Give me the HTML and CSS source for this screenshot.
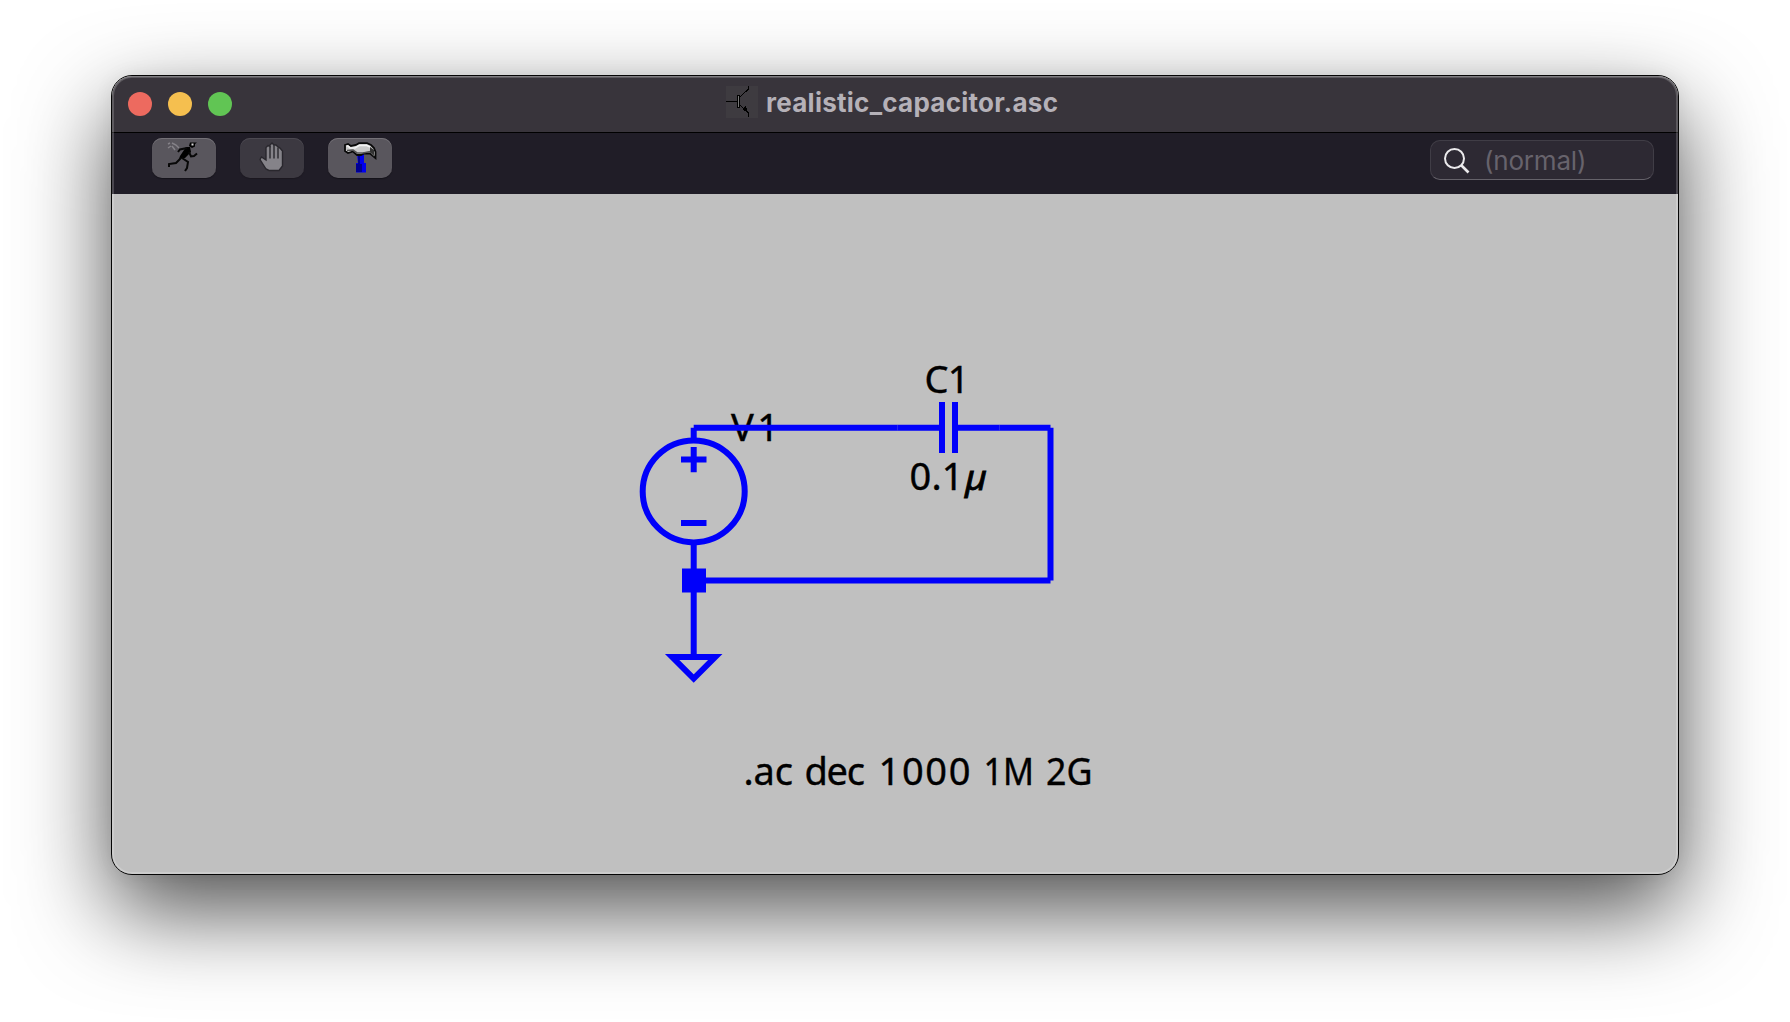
FILE: index.html
```html
<!DOCTYPE html>
<html lang="en">
<head>
<meta charset="utf-8">
<title>realistic_capacitor.asc</title>
<link rel="stylesheet" href="styles.css">
</head>
<body>
<main class="window">
  <header class="titlebar">
    <div class="lights"><i class="light close"></i><i class="light minimize"></i><i class="light expand"></i></div>
    <div class="title">
      <svg class="file-icon" viewBox="0 0 32 32" shape-rendering="crispEdges">
        <rect width="32" height="32" fill="#3e3b40"/>
        <g fill="none" stroke="#000"><path d="M0 15.5H11M14 11L22.5 3V0M14 19L22.5 27V31"/><rect x="11.5" y="9.500" width="2" height="12" fill="#777"/></g>
        <path d="M16 23L20 20L22 27Z"/>
      </svg>
      <h1>realistic_capacitor.asc</h1>
    </div>
  </header>
  <nav class="toolbar">
    <div class="tools">
      <button class="tool" aria-label="Run">
        <svg viewBox="0 0 64 40">
          <g fill="none" stroke="#858288" stroke-width="1.500"><path d="M16 6L18 5M20 5L24 7L27 10M16 10L19 8M20 8L23 12"/></g>
          <path d="M38 4.500H45L43 6V8.500L40 10L37 8ZM34 9H38L39 14L33 20L27 21L28 18Z" fill="#000"/>
          <path d="M35 10L28 11.500L26 14M37 14L39 18.500L42 18L45 15.500M29 20L24 25L17 26V29M30 20L36 24L35 30L33 33" fill="none" stroke="#080808" stroke-width="2"/>
          <path d="M39.500 6.500h2" stroke="#ddd" stroke-width="2"/>
        </svg>
      </button>
      <button class="tool muted" aria-label="Halt">
        <svg viewBox="0 0 64 40">
          <path d="M26 31L20 21.500L21.500 19L26 22V9.500L28 7.500L30 8.500V7L32 5L34 7L36 7L38 9L40 10L42.500 13V28L39 32.500H29Z" fill="#858389" stroke="#29272d" stroke-width="1.400"/>
          <path d="M30 8V20.500M34 7V20.500M38 9.500V20.500" stroke="#343238" stroke-width="1.600"/>
        </svg>
      </button>
      <button class="tool" aria-label="Control panel">
        <svg viewBox="0 0 64 40">
          <path d="M29 16H36V25H38V34.500H28V25H30Z" fill="#0000f0"/>
          <path d="M30 17h2v9h2v8h-6v-8h2Z" fill="#000091"/>
          <path d="M17 7L20 6L23 8L28 7L31 5.200H39L43 7L46 10L47.500 14V20L42 15.500H36L33 17H29L25 13.500L20 15L17 13Z" fill="#c9c9c9" stroke="#080808" stroke-width="1.800"/>
          <path d="M18.500 8L20 8L22 10H27L31 7.500H39L42 9" fill="none" stroke="#f2f2f2" stroke-width="1.600"/>
          <path d="M19 12.500L25 12L29 15H35L42 13.500L46.500 18" fill="none" stroke="#555" stroke-width="1.600"/>
          <path d="M42 9L46 12V17L42 14Z" fill="#333"/>
        </svg>
      </button>
    </div>
    <div class="search">
      <svg class="search-icon" viewBox="0 0 28 28" fill="none" stroke="#ebeaec"><circle cx="11.500" cy="11.500" r="9.500" stroke-width="2"/><path d="M18 18L25.500 25.500" stroke-width="2.700"/></svg>
      <span>(normal)</span>
    </div>
  </nav>
  <section class="canvas">
    <svg class="schematic" viewBox="112 194 1566 680">
      <g class="label">
        <text x="731" y="441" textLength="48">V1</text>
        <text x="924.500" y="393" textLength="45">C1</text>
        <text x="909.500" y="490" textLength="54">0.1</text>
        <text class="mu" x="965" y="490" textLength="22" lengthAdjust="spacingAndGlyphs">µ</text>
        <text x="743.500" y="785" textLength="49.500">.ac</text>
        <text x="804.500" y="785" textLength="60.500">dec</text>
        <text x="878.500" y="785" textLength="92">1000</text>
        <text x="983.500" y="785" textLength="50.500" lengthAdjust="spacingAndGlyphs">1M</text>
        <text x="1046" y="785" textLength="46.500" lengthAdjust="spacingAndGlyphs">2G</text>
      </g>
      <g class="wire">
        <path d="M693.700 427.800H942M955 427.800H1050.500M1050.500 427.800V580.400M1050.500 580.400H693.700M693.700 427.800V440M693.700 542V657"/>
        <path d="M942 402V453M955 402V453"/>
        <circle cx="693.700" cy="491.400" r="51"/>
        <path d="M681 459.500H706.500M693.700 447V472.300M681 523H706.500"/>
        <path d="M672.200 657H715.200L693.700 678.500Z"/>
      </g>
      <path class="seam" d="M897.500 425V431M999.500 425V431"/>
      <rect class="junction" x="682" y="568.500" width="24" height="24"/>
    </svg>
  </section>
</main>
</body>
</html>
```
FILE: styles.css
```css
* { box-sizing: border-box; }
body {
  margin: 0;
  padding: 75px 111px;
  height: 1022px;
  overflow: hidden;
  background: #fff;
}
.window {
  position: relative;
  display: flex;
  flex-direction: column;
  width: 1568px;
  height: 800px;
  border: 1px solid #050505;
  border-radius: 21px;
  background: #c0c0c0;
  box-shadow: 0 36px 90px rgba(0, 0, 0, .69), 0 0 20px rgba(0, 0, 0, .06);
}
.window::after {
  content: "";
  position: absolute;
  inset: 0;
  border-radius: 20px;
  box-shadow: inset 0 0 0 2px rgba(255, 255, 255, .19), inset 0 1px 0 rgba(255, 255, 255, .22);
  pointer-events: none;
}
.titlebar {
  display: grid;
  grid-template-columns: 1fr auto 1fr;
  align-items: center;
  height: 57px;
  flex: none;
  padding: 0 16px;
  border-bottom: 1px solid #000;
  border-radius: 20px 20px 0 0;
  background: #38343b;
}
.lights { display: flex; gap: 16px; }
.light { width: 24px; height: 24px; border-radius: 50%; }
.close { background: #ed6a5f; }
.minimize { background: #f5bf4f; }
.expand { background: #61c554; }
.title {
  display: flex;
  align-items: center;
  gap: 8px;
  height: 56px;
  padding-bottom: 4px;
}
.file-icon { width: 32px; height: 32px; }
h1 {
  margin: 2px 0 0;
  width: 298px;
  color: #b5b1b8;
  font: 700 26px/32px Inter, sans-serif;
  letter-spacing: .26px;
  white-space: nowrap;
}
.toolbar {
  display: flex;
  justify-content: space-between;
  align-items: flex-start;
  flex: none;
  height: 61px;
  padding: 5px 24px 0 40px;
  background: #201d27;
}
.tools { display: flex; gap: 24px; }
.tool {
  width: 64px;
  height: 40px;
  padding: 0;
  border: 0;
  border-radius: 10px;
  background: #59565d;
  box-shadow: inset 0 1px 0 #747177, 0 1px 1px #15131a;
}
.tool.muted { background: #3c3941; box-shadow: inset 0 1px 0 #4c4951, 0 1px 1px #1b1820; }
.tool svg { display: block; width: 64px; height: 40px; }
.search {
  display: flex;
  align-items: center;
  width: 224px;
  height: 40px;
  margin-top: 2px;
  padding: 2px 0 0 12px;
  border: 1px solid #403d46;
  border-bottom-color: #65626a;
  border-radius: 10px;
  background: #2d2933;
  color: #67636c;
  font: 26px/34px Inter, sans-serif;
}
.search-icon { width: 28px; height: 28px; margin-right: 13px; }
.search span { letter-spacing: -.2px; }
.canvas { flex: 1; }
.schematic { display: block; width: 1566px; height: 680px; }
.label { fill: #000; stroke: #000; stroke-width: .4; font: 38px "Noto Sans", sans-serif; }
.mu { font-style: italic; font-size: 35px; stroke-width: .8; }
.wire { fill: none; stroke: #0000fa; stroke-width: 6; stroke-miterlimit: 10; }
.seam { stroke: #4040e8; stroke-width: .6; }
.junction { fill: #0000fa; }
```
